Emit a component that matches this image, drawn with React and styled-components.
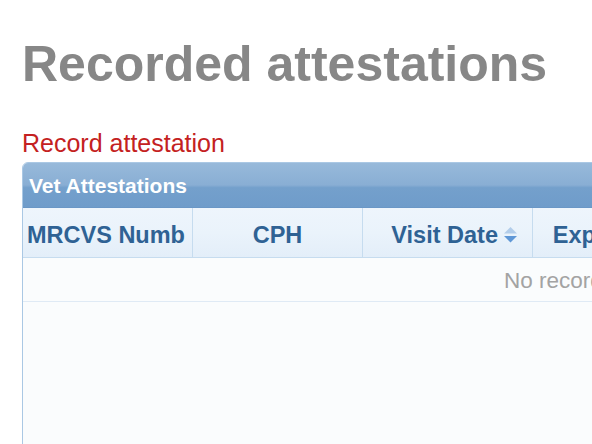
import React from "react";
import styled, { createGlobalStyle } from "styled-components";

const GlobalStyle = createGlobalStyle`
  html, body {
    margin: 0;
    padding: 0;
    background: #ffffff;
    overflow: hidden;
  }
  body {
    font-family: "Liberation Sans", Arial, Helvetica, sans-serif;
  }
`;

const Page = styled.div`
  padding: 39px 0 0 22px;
  width: 1100px;
`;

const Title = styled.h1`
  margin: 0;
  font-size: 50px;
  line-height: 50px;
  font-weight: bold;
  color: #878787;
`;

const RecordLink = styled.a`
  display: block;
  margin-top: 42px;
  font-size: 25px;
  line-height: 25px;
  color: #c42121;
  text-decoration: none;
  cursor: pointer;
`;

const Panel = styled.div`
  margin-top: 6px;
  width: 960px;
  height: 320px;
  border: 1px solid #aac8e4;
  border-radius: 6px 6px 0 0;
  background: #fafcfd;
  overflow: hidden;
`;

const Caption = styled.div`
  height: 45px;
  display: flex;
  align-items: center;
  padding: 1px 0 0 6px;
  box-sizing: border-box;
  background: linear-gradient(to bottom, #97b9da 0%, #89aed4 50%, #74a0cc 56%, #6f9cca 100%);
  border-bottom: 1px solid #6a97c6;
  color: #ffffff;
  font-size: 21px;
  font-weight: bold;
`;

const HeaderRow = styled.div`
  display: grid;
  grid-template-columns: repeat(5, 170px);
  height: 49px;
  background: linear-gradient(to bottom, #eef5fc 0%, #eaf3fb 50%, #e3eef9 100%);
  border-bottom: 1px solid #c6dcef;
`;

const HeaderCell = styled.div`
  display: flex;
  align-items: center;
  justify-content: ${(p) => p.$align || "center"};
  padding: 5px ${(p) => (p.$align === "flex-start" ? "4px 0 4px" : "14px 0")};
  border-right: 1px solid #c6dcef;
  color: #2f6294;
  font-size: 23.5px;
  font-weight: bold;
  white-space: nowrap;
  overflow: hidden;
  gap: 5px;
`;

const Label = styled.span`
  display: block;
  overflow: hidden;
  max-width: ${(p) => p.$max || "none"};
`;

const SortIcon = styled.svg`
  flex: none;
`;

const EmptyRow = styled.div`
  height: 44px;
  display: flex;
  align-items: center;
  padding: 3px 0 0 481px;
  box-sizing: border-box;
  border-bottom: 1px solid #dfeaf5;
  color: #a3a3a3;
  font-size: 22.5px;
`;

function Sort() {
  return (
    <SortIcon width="15" height="18" viewBox="0 0 15 18">
      <polygon points="7.5,1 14,7.5 1,7.5" fill="#b2cdea" />
      <polygon points="1,10 14,10 7.5,16.5" fill="#5f97d6" />
    </SortIcon>
  );
}

export default function App() {
  return (
    <>
      <GlobalStyle />
      <Page>
        <Title>Recorded attestations</Title>
        <RecordLink>Record attestation</RecordLink>
        <Panel>
          <Caption>Vet Attestations</Caption>
          <HeaderRow>
            <HeaderCell $align="flex-start">
              <Label $max="158px">MRCVS Number</Label>
            </HeaderCell>
            <HeaderCell>
              <Label>CPH</Label>
            </HeaderCell>
            <HeaderCell $align="flex-end">
              <Label>Visit Date</Label>
              <Sort />
            </HeaderCell>
            <HeaderCell>
              <Label>Expiry Date</Label>
            </HeaderCell>
            <HeaderCell>
              <Label>Actions</Label>
            </HeaderCell>
          </HeaderRow>
          <EmptyRow>No records to view</EmptyRow>
        </Panel>
      </Page>
    </>
  );
}
